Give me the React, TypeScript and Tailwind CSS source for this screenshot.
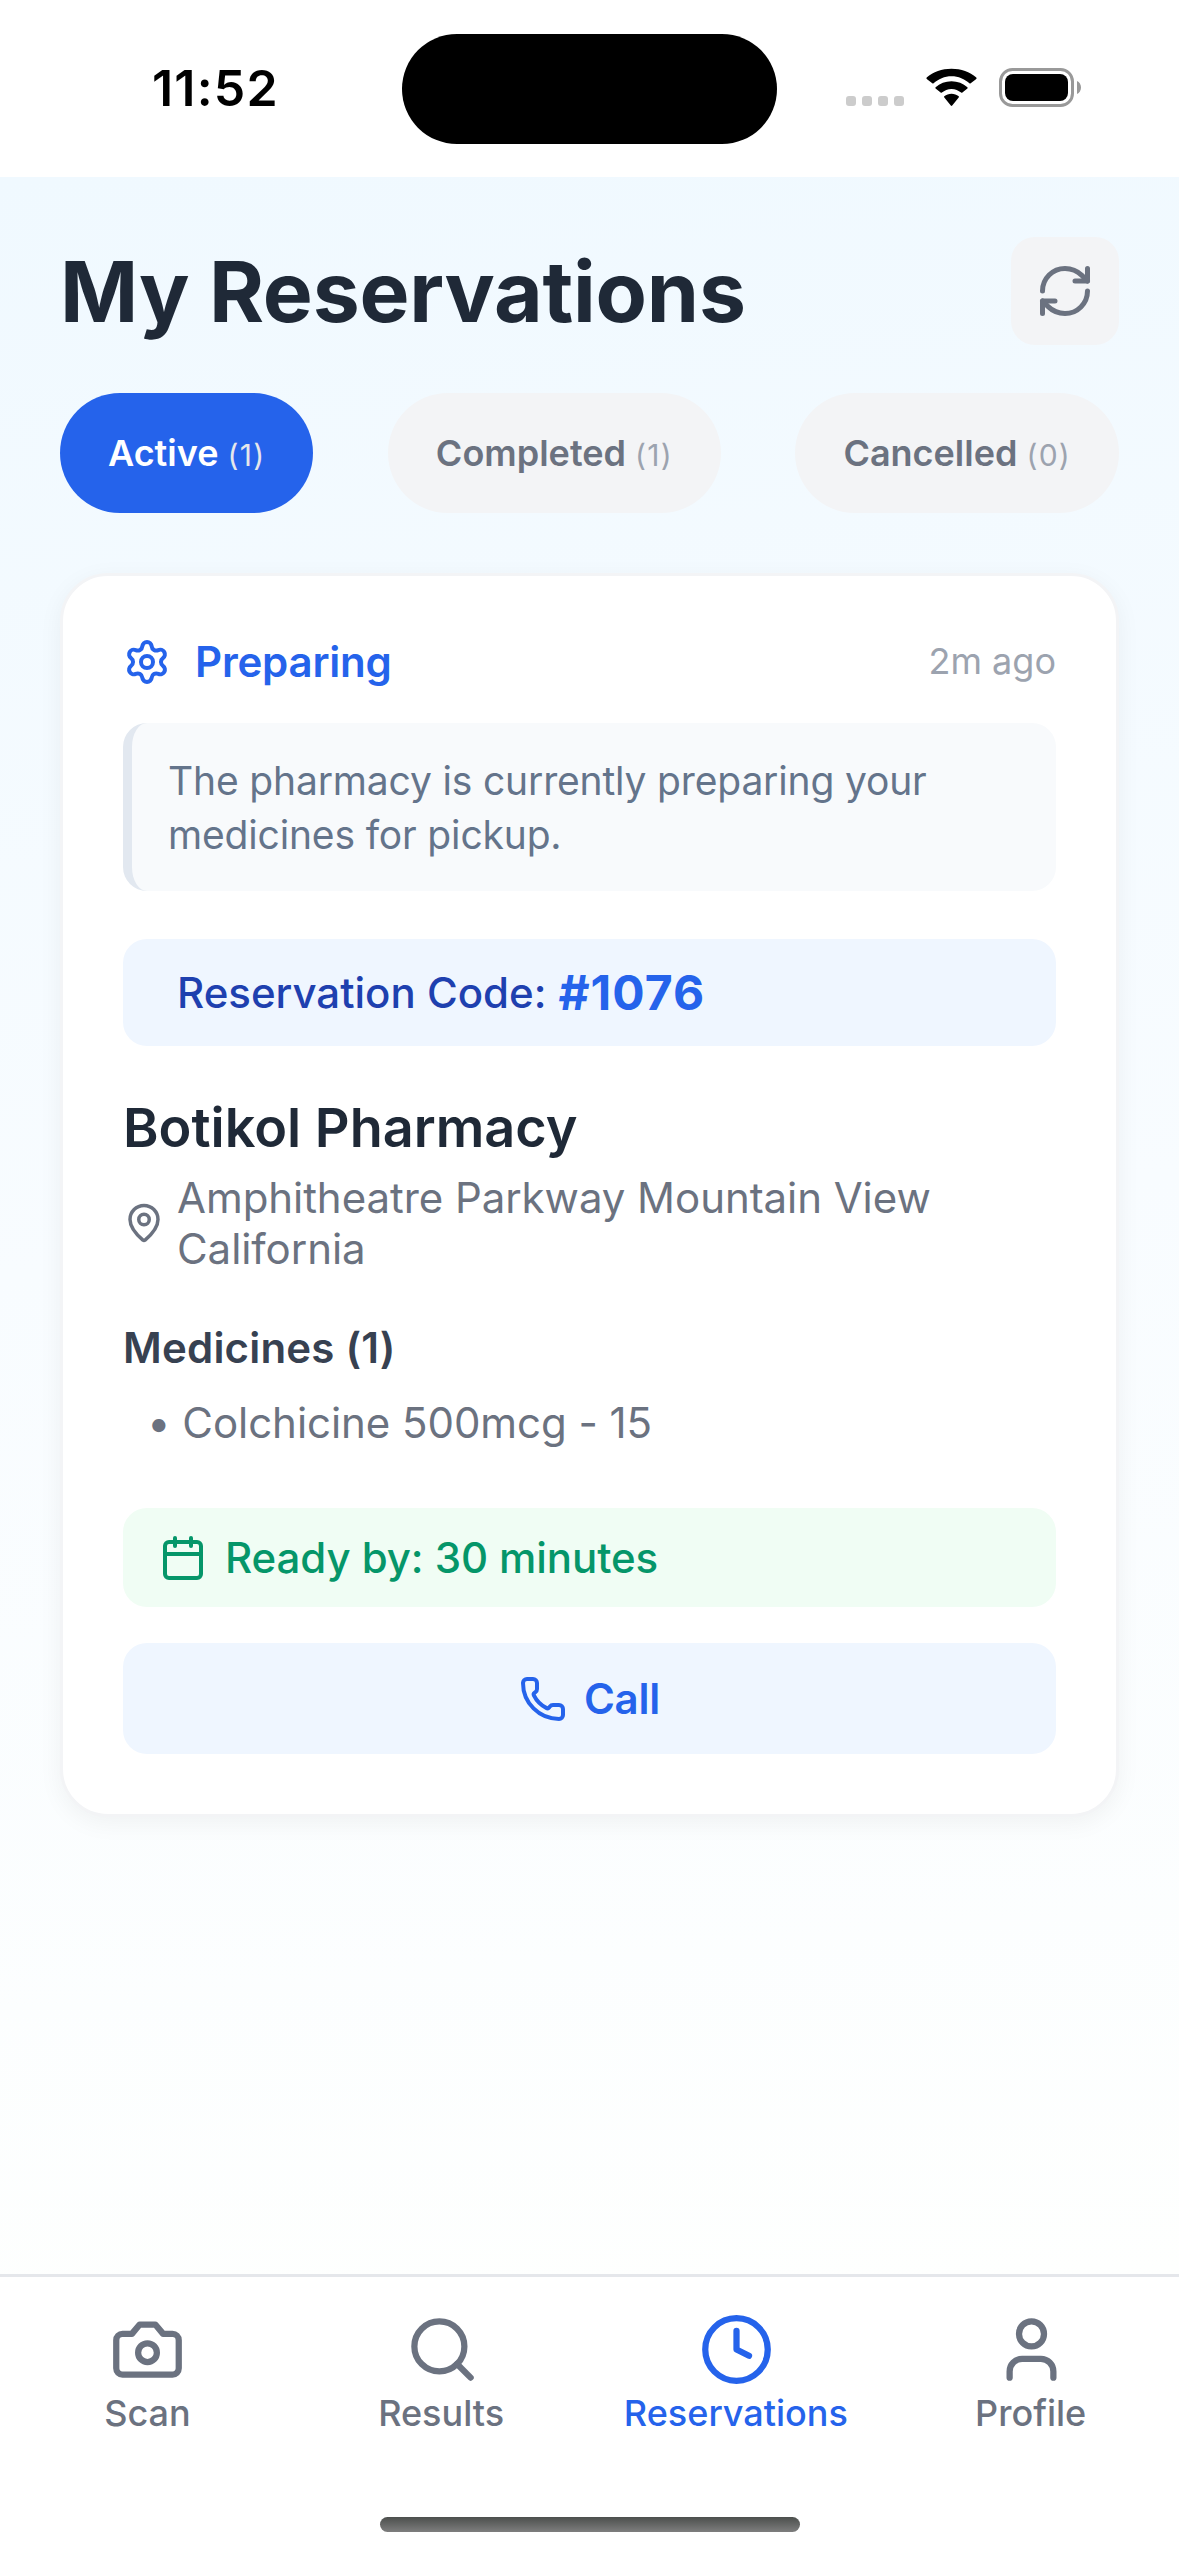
import React from 'react';
import { Calendar, Clock, MapPin, Phone, RefreshCw, Search, Settings } from 'lucide-react';

type Tab = {
    label: string
    count: number
}

const tabs: Tab[] = [
    { label: 'Active', count: 1 },
    { label: 'Completed', count: 1 },
    { label: 'Cancelled', count: 0 },
]

const CameraIcon: React.FC = () => (
    <svg width="75" height="75" viewBox="0 0 24 24" fill="none" stroke="currentColor" strokeWidth="2" strokeLinecap="round" strokeLinejoin="round">
        <path d="M14.5 4h-5L7 7H4a2 2 0 0 0-2 2v9a2 2 0 0 0 2 2h16a2 2 0 0 0 2-2V9a2 2 0 0 0-2-2h-3l-2.5-3z" />
        <circle cx="12" cy="13" r="3" />
    </svg>
)

const UserIcon: React.FC = () => (
    <svg width="75" height="75" viewBox="0 0 24 24" fill="none" stroke="currentColor" strokeWidth="2" strokeLinecap="round" strokeLinejoin="round">
        <path d="M19 21v-2a4 4 0 0 0-4-4H9a4 4 0 0 0-4 4v2" />
        <circle cx="12" cy="7" r="4" />
    </svg>
)

const StatusBar: React.FC = () => (
    <div className="flex h-[177px] shrink-0 bg-white">
        <div className="w-[402px] pt-[58px] pl-[152px] text-[50px] leading-[60px] font-semibold tracking-[1.2px] text-black">
            11:52
        </div>
        <div className="mt-[34px] h-[110px] w-[375px] rounded-full bg-black" />
        <div className="flex pl-[69px]">
            <div className="mt-[96px] flex gap-[6px]">
                <div className="size-[10px] rounded-[3px] bg-[#cccccc]" />
                <div className="size-[10px] rounded-[3px] bg-[#cccccc]" />
                <div className="size-[10px] rounded-[3px] bg-[#cccccc]" />
                <div className="size-[10px] rounded-[3px] bg-[#cccccc]" />
            </div>
            <svg className="mt-[68px] ml-[22px]" width="51" height="38" viewBox="0 0 51 38" fill="#000">
                <path d="M25.5 8.2c6.9 0 13.2 2.7 17.9 7.1.4.3.9.3 1.3 0l5.6-4.4c.4-.4.4-.9 0-1.3C43.8 4.1 35.1.8 25.5.8S7.2 4.1.7 9.6c-.4.4-.4.9 0 1.3l5.6 4.4c.4.3.9.3 1.3 0C12.3 10.9 18.6 8.2 25.5 8.2z" />
                <path d="M25.5 20.9c3.7 0 7 1.4 9.6 3.7.4.4.9.3 1.3 0l5-4c.4-.3.4-.9 0-1.3-4.2-3.8-9.8-6-15.9-6s-11.7 2.2-15.9 6c-.4.4-.4 1 0 1.3l5 4c.4.3.9.4 1.3 0 2.6-2.3 5.9-3.7 9.6-3.7z" />
                <path d="M32.7 29.5c.4-.4.4-.9 0-1.2-2-1.6-4.5-2.6-7.2-2.6s-5.2 1-7.2 2.6c-.4.3-.4.8 0 1.2l6.5 8c.4.5 1 .5 1.4 0z" />
            </svg>
            <svg className="mt-[68px] ml-[22px]" width="83" height="39" viewBox="0 0 83 39">
                <rect x="1.5" y="1.5" width="72" height="36" rx="12" fill="none" stroke="#999" strokeWidth="3" />
                <rect x="6" y="6" width="63" height="27" rx="8" fill="#000" />
                <path d="M78 13c2.5 1.1 4 3.6 4 6.5s-1.5 5.4-4 6.5z" fill="#999" />
            </svg>
        </div>
    </div>
)

const ReservationCard: React.FC = () => (
    <div className="mt-[60px] rounded-[48px] border-3 border-[#f3f4f6] bg-white p-[60px] text-[42px] leading-[51px] shadow-[0_6px_24px_rgba(0,0,0,0.05)]">
        <div className="flex items-center justify-between">
            <div className="flex items-center gap-6 font-semibold text-[#2563eb]">
                <Settings size={48} />
                <span className="tracking-[-0.2px]">Preparing</span>
            </div>
            <span className="pb-px text-[36px] leading-[43px] text-[#9ca3af]">2m ago</span>
        </div>
        <div className="mt-9 rounded-3xl border-l-9 border-[#e2e8f0] bg-[#f8fafc] px-9 pt-[31px] pb-[29px] text-[39px] leading-[54px] tracking-[-0.16px] text-[#64748b]">
            The pharmacy is currently preparing your<br />medicines for pickup.
        </div>
        <div className="mt-12 flex h-[107px] items-center rounded-3xl bg-[#eff6ff] pl-[54px]">
            <span className="font-medium text-[#1e40af]">Reservation Code:</span>
            <span className="ml-3 text-[48px] leading-[58px] font-bold tracking-[1px] text-[#2563eb]">#1076</span>
        </div>
        <h2 className="mt-[49px] text-[54px] leading-[65px] font-semibold text-[#1f2937]">Botikol Pharmacy</h2>
        <div className="mt-3 flex items-center gap-3 tracking-[-0.06px] text-[#6b7280]">
            <MapPin size={42} />
            <p>Amphitheatre Parkway Mountain View<br />California</p>
        </div>
        <h3 className="mt-12 font-semibold tracking-[0.2px] text-[#374151]">Medicines (1)</h3>
        <p className="mt-6 pl-6 tracking-[-0.06px] text-[#6b7280]">• Colchicine 500mcg - 15</p>
        <div className="mt-[60px] flex items-center gap-[18px] rounded-3xl bg-[#f0fdf4] px-9 py-6 font-medium tracking-[-0.08px] text-[#059669]">
            <Calendar size={48} />
            <span>Ready by: 30 minutes</span>
        </div>
        <button className="mt-9 flex w-full items-center justify-center gap-[17px] rounded-3xl bg-[#eff6ff] py-[30px] font-semibold tracking-[-0.2px] text-[#2563eb]">
            <Phone size={48} />
            <span>Call</span>
        </button>
    </div>
)

const App: React.FC = () => {
    const [active, setActive] = React.useState('Active')

    return (
        <div className="flex h-[2556px] w-[1179px] flex-col overflow-hidden bg-white font-['Inter',sans-serif]">
            <StatusBar />
            <main className="flex-1 bg-linear-[175deg] from-[#f0f9ff] via-[#f8fcff] to-[#fefffe] px-[60px] pt-[60px]">
                <div className="flex items-center justify-between">
                    <h1 className="pt-px text-[84px] leading-[102px] font-bold tracking-[-0.22px] text-[#1f2937]">My Reservations</h1>
                    <button className="rounded-3xl bg-[#f3f4f6] p-6 text-[#6b7280]">
                        <RefreshCw size={60} />
                    </button>
                </div>
                <div className="mt-12 flex justify-between">
                    {tabs.map((tab) => (
                        <button
                            key={tab.label}
                            onClick={() => setActive(tab.label)}
                            className={`flex h-[120px] items-center rounded-full px-12 text-[36px] leading-[44px] font-semibold ${active === tab.label ? 'bg-[#2563eb] text-white' : 'bg-[#f3f4f6] text-[#6b7280]'}`}
                        >
                            <span className="pt-px whitespace-pre">
                                {tab.label}{' '}
                                <span className={`text-[30px] font-normal tracking-[1.2px] ${active === tab.label ? 'text-[#e5e7eb]' : 'text-[#9ca3af]'}`}>({tab.count})</span>
                            </span>
                        </button>
                    ))}
                </div>
                <ReservationCard />
            </main>
            <nav className="flex h-[282px] shrink-0 flex-col border-t-3 border-[#e5e7eb] bg-white">
                <div className="grid grid-cols-4 pt-[35px] text-[36px] leading-[44px] font-medium text-[#6b7280]">
                    <div className="flex flex-col items-center gap-1">
                        <CameraIcon />
                        <span>Scan</span>
                    </div>
                    <div className="flex flex-col items-center gap-1">
                        <Search size={75} />
                        <span className="pr-0.5">Results</span>
                    </div>
                    <div className="flex flex-col items-center gap-1 text-[#2563eb]">
                        <Clock size={75} />
                        <span className="pr-0.5">Reservations</span>
                    </div>
                    <div className="flex flex-col items-center gap-1">
                        <UserIcon />
                        <span className="pr-0.5">Profile</span>
                    </div>
                </div>
                <div className="mx-auto mt-[82px] h-[15px] w-[420px] rounded-full bg-linear-to-b from-[#4c4f4d] to-[#7e7e7e]" />
            </nav>
        </div>
    );
}

export default App
